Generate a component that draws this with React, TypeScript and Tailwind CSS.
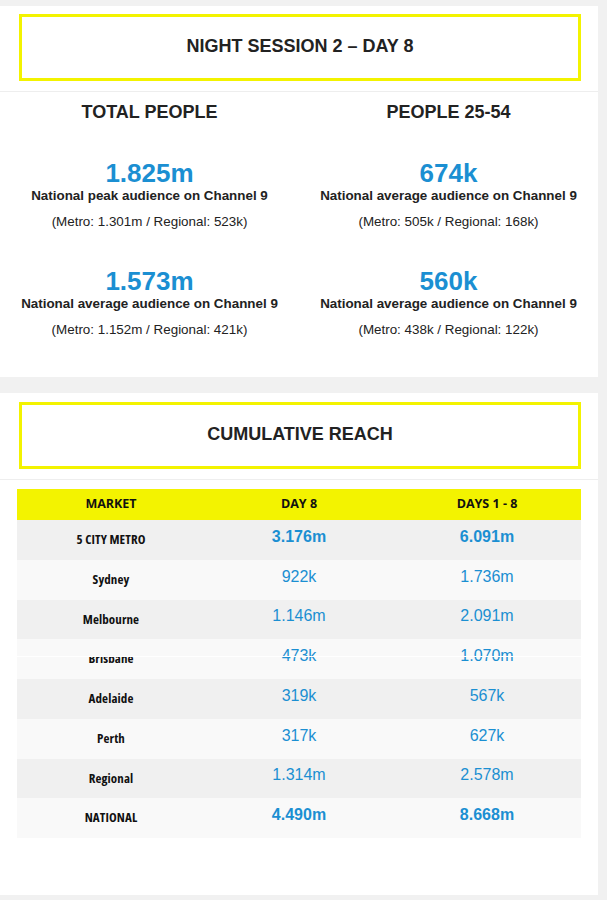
import React from "react";

type Row = {
  market: string;
  day: string;
  total: string;
  strong?: boolean;
  glitch?: boolean;
};

const rows: Row[] = [
  { market: "5 CITY METRO", day: "3.176m", total: "6.091m", strong: true },
  { market: "Sydney", day: "922k", total: "1.736m" },
  { market: "Melbourne", day: "1.146m", total: "2.091m" },
  { market: "Brisbane", day: "473k", total: "1.070m", glitch: true },
  { market: "Adelaide", day: "319k", total: "567k" },
  { market: "Perth", day: "317k", total: "627k" },
  { market: "Regional", day: "1.314m", total: "2.578m" },
  { market: "NATIONAL", day: "4.490m", total: "8.668m", strong: true },
];

const stats = [
  [
    {
      value: "1.825m",
      label: "National peak audience on Channel 9",
      split: "(Metro: 1.301m / Regional: 523k)",
    },
    {
      value: "1.573m",
      label: "National average audience on Channel 9",
      split: "(Metro: 1.152m / Regional: 421k)",
    },
  ],
  [
    {
      value: "674k",
      label: "National average audience on Channel 9",
      split: "(Metro: 505k / Regional: 168k)",
    },
    {
      value: "560k",
      label: "National average audience on Channel 9",
      split: "(Metro: 438k / Regional: 122k)",
    },
  ],
];

function TitleBox({ children }: { children: React.ReactNode }) {
  return (
    <div className="ml-[19px] w-[562px] h-[67px] border-[3px] border-[#f3f300] flex items-center justify-center pb-[3px] text-[18px] font-bold text-[#222222]">
      {children}
    </div>
  );
}

function StatColumn({
  heading,
  items,
}: {
  heading: string;
  items: { value: string; label: string; split: string }[];
}) {
  return (
    <div className="flex flex-col items-center text-center">
      <h3 className="mt-[9px] text-[18px] leading-[22px] font-bold text-[#222222]">
        {heading}
      </h3>
      {items.map((s, i) => (
        <div key={s.value} className={i === 0 ? "mt-[35px]" : "mt-[36px]"}>
          <div className="text-[26px] leading-[30px] font-bold text-[#1b8fd2]">
            {s.value}
          </div>
          <div className="text-[13.4px] leading-[16px] font-bold text-[#222222]">
            {s.label}
          </div>
          <div className="mt-[10px] text-[13.4px] leading-[16px] text-[#222222]">
            {s.split}
          </div>
        </div>
      ))}
    </div>
  );
}

function ReachRow({ row, index }: { row: Row; index: number }) {
  const bg = index % 2 === 0 ? "bg-[#f0f0f0]" : "bg-[#f9f9f9]";
  return (
    <div className={`relative grid grid-cols-3 h-[39.75px] ${bg}`}>
      <div className="relative flex items-center justify-center text-[13px] tracking-[0.1px] font-bold font-stretch-condensed text-[#111111] font-['Open_Sans',sans-serif]">
        {row.market}
        {/* broken repaint in the original capture */}
        {row.glitch && (
          <div className="absolute left-0 right-0 top-0 h-[17px] bg-[#f9f9f9]" />
        )}
      </div>
      <div
        className={`flex items-center justify-center pb-[6px] text-[16px] text-[#1b8fd2] ${
          row.strong ? "font-bold" : ""
        }`}
      >
        {row.day}
      </div>
      <div
        className={`flex items-center justify-center pb-[6px] text-[16px] text-[#1b8fd2] ${
          row.strong ? "font-bold" : ""
        }`}
      >
        {row.total}
      </div>
      {row.glitch && (
        <div className="absolute left-0 right-0 top-[17px] h-px bg-white" />
      )}
    </div>
  );
}

export default function App() {
  return (
    <div className="min-h-[900px] bg-[#f1f1f1] pt-[6px] font-['Liberation_Sans',Arial,sans-serif]">
      {/* Night session card */}
      <section className="w-[598px] h-[371px] bg-white pt-2">
        <TitleBox>NIGHT SESSION 2 – DAY 8</TitleBox>
        <div className="mt-[10px] h-px bg-[#eeeeee]" />
        <div className="grid grid-cols-2">
          <StatColumn heading="TOTAL PEOPLE" items={stats[0]} />
          <StatColumn heading="PEOPLE 25-54" items={stats[1]} />
        </div>
      </section>

      {/* Cumulative reach card */}
      <section className="mt-4 w-[598px] h-[502px] bg-white pt-[9px]">
        <TitleBox>CUMULATIVE REACH</TitleBox>
        <div className="mt-[10px] h-px bg-[#eeeeee]" />
        <div className="ml-[17px] mt-[9px] w-[564px]">
          <div className="grid grid-cols-3 h-[31px] bg-[#f3f300] text-[12.5px] font-bold text-[#111111] font-['Open_Sans',sans-serif]">
            <div className="flex items-center justify-center">MARKET</div>
            <div className="flex items-center justify-center">DAY 8</div>
            <div className="flex items-center justify-center">DAYS 1 - 8</div>
          </div>
          {rows.map((r, i) => (
            <ReachRow key={r.market} row={r} index={i} />
          ))}
        </div>
      </section>
    </div>
  );
}
